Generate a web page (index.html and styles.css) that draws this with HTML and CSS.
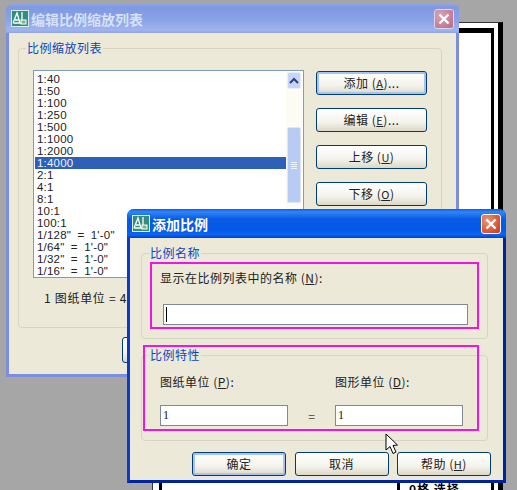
FILE: index.html
```html
<!DOCTYPE html>
<html lang="zh-CN">
<head>
<meta charset="UTF-8">
<title>添加比例</title>
<link rel="stylesheet" href="styles.css">
</head>
<body>
<div class="desktop">
    <div class="paper">
        <div class="paper-frame"></div>
        <div class="paper-rule"></div>
        <div class="paper-note">0格 选择</div>
    </div>

    <div class="dialog dialog-back">
        <div class="titlebar">
            <svg class="app-icon" viewBox="0 0 18 17">
                <rect x="0.5" y="0.5" width="17" height="16" fill="#2f8f7c" stroke="#d8efe6"/>
                <path d="M2 13 L6 3 L9 13 M4 10 H8 M11 2 V13 M2 13 H12" fill="none" stroke="#fff" stroke-width="1.3"/>
                <rect x="10" y="10" width="5" height="4" fill="#7fb08f" stroke="#fff"/>
            </svg>
            <span class="title-text">编辑比例缩放列表</span>
            <span class="close"><svg viewBox="0 0 12 12"><path d="M1.5 1.5 L10.5 10.5 M10.5 1.5 L1.5 10.5" stroke="#fff" stroke-width="2.4"/></svg></span>
        </div>
        <div class="dialog-body">
            <fieldset class="group group-list">
                <legend>比例缩放列表</legend>
                <div class="list-row">
                    <div class="listbox">
                        <ul class="scale-list">
                            <li>1:40</li>
                            <li>1:50</li>
                            <li>1:100</li>
                            <li>1:250</li>
                            <li>1:500</li>
                            <li>1:1000</li>
                            <li>1:2000</li>
                            <li class="selected">1:4000</li>
                            <li>2:1</li>
                            <li>4:1</li>
                            <li>8:1</li>
                            <li>10:1</li>
                            <li>100:1</li>
                            <li>1/128" = 1'-0"</li>
                            <li>1/64" = 1'-0"</li>
                            <li>1/32" = 1'-0"</li>
                            <li>1/16" = 1'-0"</li>
                        </ul>
                        <div class="scrollbar">
                            <span class="scroll-up"><svg viewBox="0 0 10 7"><path d="M1 6 L5 2 L9 6" fill="none" stroke="#2b3f7f" stroke-width="2"/></svg></span>
                            <span class="scroll-thumb"><i></i><i></i><i></i><i></i></span>
                        </div>
                    </div>
                    <div class="side-buttons">
                        <button class="btn btn-default">添加 (<u>A</u>)...</button>
                        <button class="btn">编辑 (<u>E</u>)...</button>
                        <button class="btn">上移 (<u>U</u>)</button>
                        <button class="btn">下移 (<u>O</u>)</button>
                    </div>
                </div>
                <p class="ratio">1 图纸单位 = 4000 图形单位</p>
            </fieldset>
            <div class="back-actions">
                <button class="btn btn-wide">确定</button>
            </div>
        </div>
    </div>

    <div class="dialog dialog-front">
        <div class="titlebar">
            <svg class="app-icon" viewBox="0 0 18 17">
                <rect x="0.5" y="0.5" width="17" height="16" fill="#2f8f7c" stroke="#d8efe6"/>
                <path d="M2 13 L6 3 L9 13 M4 10 H8 M11 2 V13 M2 13 H12" fill="none" stroke="#fff" stroke-width="1.3"/>
                <rect x="10" y="10" width="5" height="4" fill="#7fb08f" stroke="#fff"/>
            </svg>
            <span class="title-text">添加比例</span>
            <span class="close"><svg viewBox="0 0 12 12"><path d="M1.5 1.5 L10.5 10.5 M10.5 1.5 L1.5 10.5" stroke="#fff" stroke-width="2.4"/></svg></span>
        </div>
        <div class="dialog-body">
            <fieldset class="group group-name">
                <legend>比例名称</legend>
                <label class="field-label">显示在比例列表中的名称 (<u>N</u>):</label>
                <div class="input input-name"><span class="caret"></span></div>
            </fieldset>
            <fieldset class="group group-props">
                <legend>比例特性</legend>
                <div class="props-grid">
                    <label class="field-label">图纸单位 (<u>P</u>):</label>
                    <span></span>
                    <label class="field-label">图形单位 (<u>D</u>):</label>
                    <div class="input">1</div>
                    <span class="equals">=</span>
                    <div class="input">1</div>
                </div>
            </fieldset>
            <div class="front-actions">
                <button class="btn btn-wide btn-default">确定</button>
                <button class="btn btn-wide">取消</button>
                <button class="btn btn-wide">帮助 (<u>H</u>)</button>
            </div>
            <div class="mark mark-name"></div>
            <div class="mark mark-props"></div>
        </div>
    </div>

    <svg class="cursor" viewBox="0 0 13 22">
        <path d="M1 1 V17 L5 13.5 L8 20.5 L11 19 L8 12.5 L12.5 12 Z" fill="#fff" stroke="#000" stroke-width="1"/>
    </svg>
</div>
</body>
</html>
```

FILE: styles.css
```css
html,
body {
    margin: 0;
    padding: 0;
}
.desktop {
    position: relative;
    width: 517px;
    height: 490px;
    overflow: hidden;
    background: #a6a6a6;
    font: 12px/16px "Noto Sans CJK SC", "Liberation Sans", sans-serif;
    color: #222;
}

/* drawing behind the dialogs */
.paper {
    position: absolute;
    left: 152px;
    top: 22px;
    width: 345px;
    height: 480px;
    background: #fff;
    border: 1px solid #333;
    border-right: 5px solid #000;
}
.paper-frame {
    position: absolute;
    left: 6px;
    top: 5px;
    right: 4px;
    height: 470px;
    border: 4px solid #000;
    border-width: 5px 3px 0 3px;
}
.paper-rule {
    position: absolute;
    left: 244px;
    top: 440px;
    width: 3px;
    height: 40px;
    background: #000;
}
.paper-note {
    position: absolute;
    left: 256px;
    top: 458px;
    font-weight: bold;
    color: #000;
    letter-spacing: 1px;
}

/* windows */
.dialog {
    position: absolute;
    box-sizing: border-box;
    display: flex;
    flex-direction: column;
    border-radius: 7px 7px 0 0;
    background: #ece9d8;
}
.dialog-back {
    left: 6px;
    top: 4px;
    width: 453px;
    height: 373px;
    border: 3px solid #7c8fdc;
    border-top: 0;
}
.dialog-front {
    left: 127px;
    top: 209px;
    width: 379px;
    height: 274px;
    border: 3px solid #0a3ad0;
    border-top: 0;
    border-right-color: #00249c;
    border-bottom-color: #00249c;
}
.titlebar {
    display: flex;
    align-items: center;
    flex: none;
    height: 29px;
    margin: 0 -3px;
    padding: 0 5px 0 5px;
    border-radius: 7px 7px 0 0;
}
.dialog-back .titlebar {
    background: linear-gradient(#8da4e6, #7f9ae2 12%, #8aa2e6 55%, #a0b4ee 90%, #8ea4e4);
}
.dialog-front .titlebar {
    background: linear-gradient(#0a5ce8, #2f86f8 10%, #0a5ae4 35%, #0558e8 70%, #0a66f4 88%, #0040c8);
}
.app-icon {
    flex: none;
    width: 18px;
    height: 17px;
    margin-right: 2px;
}
.title-text {
    flex: 1;
    font-size: 14px;
    font-weight: bold;
    color: #fff;
}
.dialog-back .title-text {
    color: #d6e0f6;
}
.close {
    display: flex;
    align-items: center;
    justify-content: center;
    flex: none;
    box-sizing: border-box;
    width: 20px;
    height: 20px;
    border: 1px solid #fff;
    border-radius: 3px;
    background: radial-gradient(circle at 30% 30%, #e8957e, #d8502c 70%, #c23c1c);
}
.dialog-back .close {
    background: radial-gradient(circle at 30% 30%, #d9a4b4, #c47a92 70%, #b06a8c);
    border-color: #d8d8f0;
}
.close svg {
    width: 12px;
    height: 12px;
}
.dialog-body {
    position: relative;
    flex: 1;
}

/* group boxes */
.group {
    box-sizing: border-box;
    margin: 0;
    padding: 0;
    border: 1px solid #d8d5c4;
    border-radius: 4px;
    min-width: 0;
}
.group legend {
    margin-left: 7px;
    padding: 0 1px;
    color: #0a46c0;
    letter-spacing: 0.5px;
}
.group-list {
    width: 424px;
    height: 288px;
    margin: 7px 0 0 9px;
    padding: 14px 0 0;
}
.list-row {
    display: flex;
    gap: 12px;
    margin-left: 14px;
}
.listbox {
    display: flex;
    box-sizing: border-box;
    width: 271px;
    height: 208px;
    padding: 1px;
    border: 1px solid #7f9db9;
    background: #fff;
}
.scale-list {
    flex: 1;
    margin: 0;
    padding: 1px 0 0;
    list-style: none;
    overflow: hidden;
    font: 11.5px/12px "Liberation Sans", sans-serif;
    word-spacing: 3px;
    letter-spacing: 0.2px;
}
.scale-list li {
    height: 12px;
    padding-left: 2px;
    white-space: nowrap;
    color: #222;
}
.scale-list .selected {
    background: #2f60b8;
    color: #eef2fb;
}
.scrollbar {
    display: flex;
    flex-direction: column;
    flex: none;
    box-sizing: border-box;
    width: 16px;
    padding: 0 1px;
    background: #fcfcf4;
}
.scroll-up {
    display: flex;
    align-items: center;
    justify-content: center;
    flex: none;
    height: 17px;
    border-radius: 2px;
    border: 1px solid #e8eefc;
    box-sizing: border-box;
    background: #c6d6f6;
}
.scroll-up svg {
    width: 10px;
    height: 7px;
}
.scroll-thumb {
    display: flex;
    flex-direction: column;
    align-items: center;
    justify-content: center;
    gap: 1px;
    height: 76px;
    margin-top: 38px;
    border: 1px solid #dde6fa;
    border-radius: 2px;
    box-sizing: border-box;
    background: #b7cbf4;
}
.scroll-thumb i {
    display: block;
    width: 6px;
    height: 1px;
    background: #eef3fd;
}
.side-buttons {
    display: flex;
    flex-direction: column;
    gap: 13px;
    padding-top: 1px;
}
.ratio {
    margin: 12px 0 0 25px;
    letter-spacing: 0.7px;
    white-space: nowrap;
}
.back-actions {
    margin: 9px 0 0 113px;
}

/* buttons */
.btn {
    box-sizing: border-box;
    width: 111px;
    height: 24px;
    padding: 0;
    border: 1px solid #003c74;
    border-radius: 3px;
    background: linear-gradient(#fff, #f4f3ec 60%, #dcd8c8);
    font: inherit;
    color: #222;
    letter-spacing: 0.5px;
}
.btn u {
    font-size: 11px;
}
.btn-default {
    box-shadow: inset 0 0 0 2px #a8c4ee;
}
.btn-wide {
    width: 94px;
    height: 26px;
}
.front-actions .btn-wide {
    height: 24px;
}

/* add-scale dialog */
.dialog-front .group {
    width: 347px;
    height: 94px;
    margin: 7px 0 0 11px;
}
.dialog-front .group-props {
    margin-top: 8px;
}
.field-label {
    letter-spacing: 0.5px;
    white-space: nowrap;
}
.group-name {
    padding: 9px 0 0;
}
.group-name .field-label {
    display: block;
    margin-left: 18px;
}
.input {
    box-sizing: border-box;
    height: 21px;
    padding: 2px 2px;
    border: 1px solid #7f8a94;
    background: #fff;
    font: 12px/15px "Liberation Serif", serif;
    color: #111;
}
.input-name {
    width: 305px;
    margin: 18px 0 0 21px;
}
.caret {
    display: block;
    width: 1px;
    height: 15px;
    background: #000;
}
.props-grid {
    display: grid;
    grid-template-columns: 128px 47px 128px;
    grid-template-rows: 16px 21px;
    row-gap: 15px;
    padding: 11px 0 0 18px;
}
.equals {
    align-self: center;
    text-align: center;
    color: #444;
}
.front-actions {
    display: flex;
    gap: 8.5px;
    margin: 11px 0 0 62px;
}

/* pink call-outs drawn over the screenshot */
.mark {
    position: absolute;
    box-sizing: border-box;
    border: 2px solid #f414e0;
}
.mark-name {
    left: 20px;
    top: 24px;
    width: 329px;
    height: 67px;
}
.mark-props {
    left: 13px;
    top: 107px;
    width: 336px;
    height: 86px;
}
.cursor {
    position: absolute;
    left: 385px;
    top: 433px;
    width: 13px;
    height: 22px;
}
```
